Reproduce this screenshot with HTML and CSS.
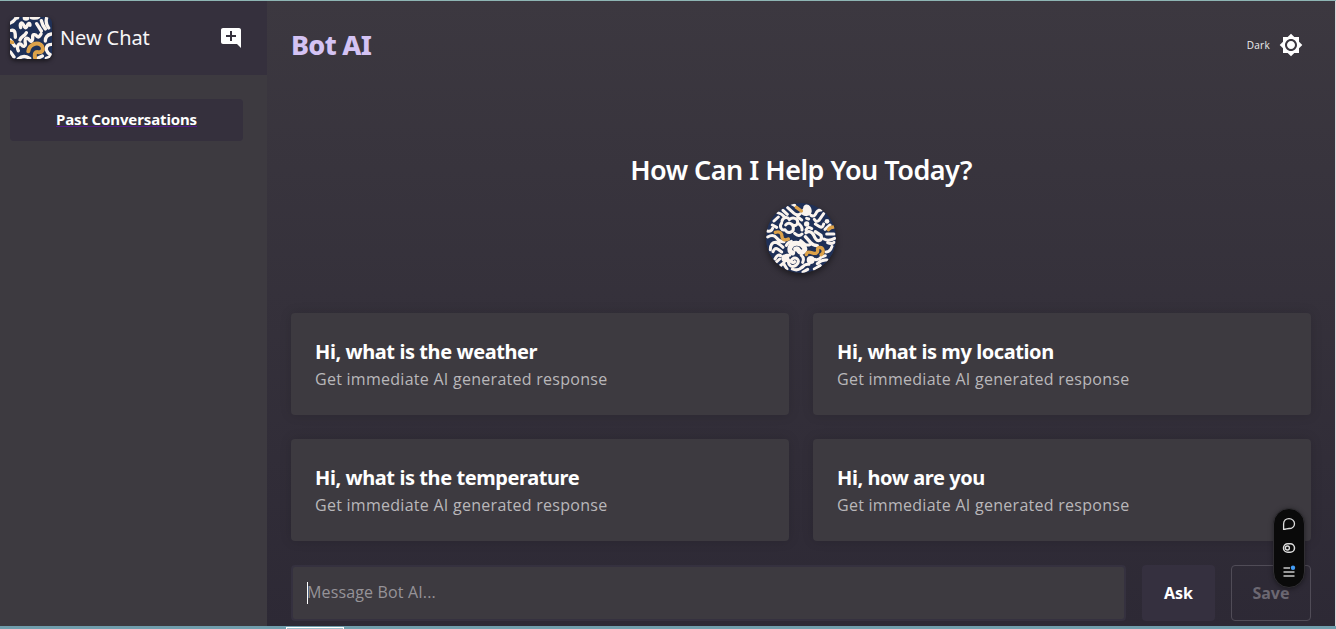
FILE: index.html
```html
<!DOCTYPE html>
<html lang="en">
<head>
<meta charset="utf-8">
<title>Bot AI</title>
<link rel="stylesheet" href="styles.css">
</head>
<body>
<div class="app">
  <aside class="sidebar">
    <header class="new-chat">
      <svg class="logo" viewBox="30 27 126 126">
        <rect x="30" y="27" width="126" height="126" fill="#1f3057"/>
        <g fill="none" stroke="#fbf4ee" stroke-width="10" stroke-linecap="round" stroke-linejoin="round">
          <path d="M30 45q9-2 15-11M62 59c-4-14 4-18 8-9s7 13 11 4 9-11 9-2M94 29q15 4 22-2M110 47l14 22M124 38q3 14 12 25M140 29q-5 17 6 31M34 67c12-2 12 9 12 21M31 96l13 18M55 128c-7-14 3-25 9-18 6 8 14 6 12-5-3-16 6-19 13-8 5 7 10 0 9-9-1-10 8-10 13-3 5 5 9-2 12-7M60 96c4-12 13-10 19-22M136 99c0-13 8-19 18-21M155 109q-18 0-16 17 3 9 13 15M31 132l11 15M55 153q15-14 34-2M113 151l14-7M139 151l12-5"/>
        </g>
        <path d="M28 99q6 5 14 4" fill="none" stroke="#dda249" stroke-width="10"/>
        <path d="M85 130c3-22 25-27 37-20 12 9 6 24-5 23-12-4-14 4-12 16" fill="none" stroke="#dda249" stroke-width="12" stroke-linecap="round"/>
        <ellipse cx="50" cy="29" rx="8" ry="6" fill="#fbf4ee"/><ellipse cx="78" cy="30" rx="10" ry="8" fill="#fbf4ee"/>
      </svg>
      <span class="new-chat-label">New Chat</span>
      <svg class="add-icon" viewBox="0 0 24 24"><path fill="#fff" d="M22 4c0-1.100-.9-2-2-2H4c-1.100 0-2 .9-2 2v12c0 1.100.9 2 2 2h14l4 4V4zm-5 7h-4v4h-2v-4H7V9h4V5h2v4h4v2z"/></svg>
    </header>
    <a class="past"><span>Past Conversations</span></a>
  </aside>
  <main class="main">
    <header class="topbar">
      <h1 class="brand">Bot AI</h1>
      <div class="mode"><span class="mode-label">Dark</span>
        <svg class="mode-icon" viewBox="0 0 24 24"><path fill="#fff" d="M20 8.690V4h-4.690L12 .69 8.690 4H4v4.690L.69 12 4 15.310V20h4.690L12 23.310 15.310 20H20v-4.690L23.310 12 20 8.690zM12 18c-3.310 0-6-2.690-6-6s2.690-6 6-6 6 2.690 6 6-2.690 6-6 6zm0-10c-2.210 0-4 1.790-4 4s1.790 4 4 4 4-1.790 4-4-1.790-4-4-4z"/></svg>
      </div>
    </header>
    <section class="hero">
      <h2 class="question">How Can I Help You Today?</h2>
      <svg class="emblem" viewBox="33 24 210 210">
        <rect x="33" y="24" width="210" height="210" fill="#1f3057"/>
        <g fill="none" stroke="#fbf4ee" stroke-width="9" stroke-linecap="round" stroke-linejoin="round">
          <path d="M98 38l19 17q10 8 18 2M84 46l13 12M68 53q12 3 20 12M70 66l-13 12M52 90l13 7M111 27l8 4"/>
          <path d="M81 78c4-12 17-14 22-4 10-9 25-4 25 7 0 9-9 14-16 8M80 84c-8 10-1 24 10 20 8 15 27 8 25-7-2-12-17-17-23-7"/>
          <path d="M128 66l12 9M130 85q13 10 11 20M119 115q13 12 22 2M155 70l6 2M168 61q9 5 14-4 5-13 17-12M178 73q5 10 14 3l14-20M153 104q7-12 17-3M181 87l13 8q9 5 12-8M210 103l15-13M215 117h22M207 132q13 8 32-2"/>
          <path d="M153 113q12-9 23 7 6 16 14 17 13 0 8-16l-17-11M151 125l16 18q7 8 20 9" stroke-width="10"/>
          <path d="M37 108q12 4 16-8M38 126q17-10 27 3t22 11M46 164q0-23 18-22 12 6 20 15M54 170q6-15 15-7l11 8M60 192q8-16 17-10M61 204l13-12M75 213l12-10"/>
          <path d="M113 174c-16-3-9-31 13-29 21 0 32 22 15 27-15 0-7-14-19-10" stroke-width="15"/>
          <path d="M94 151q4-9 15-12M137 137l13 11q8 4 15 1M102 196c-6 14 10 24 22 14 14-13-1-28-12-18-8 8 1 15 7 8M139 181q10 8 4 21M142 217q8-11 20-9M112 222q18 8 32-8M144 231l14-8M88 209l8 13M180 193q9 4 19-7l12-4M187 206q14-13 29-11M178 222l18-10M213 171q13-1 18-17M218 143q11 6 19-1M94 181h10"/>
        </g>
        <g fill="#fbf4ee"><path d="M145 35c12-16 27 3 25 15-2 15-22 17-32 6-8-10 8-8 7-21z"/><circle cx="155" cy="87" r="8"/><circle cx="91" cy="190" r="12"/><circle cx="216" cy="79" r="7"/><circle cx="167" cy="195" r="12"/></g>
        <g fill="none" stroke="#dda249" stroke-width="10" stroke-linecap="round"><path d="M124 37l15 11M61 112c16-5 20 5 20 14 2 10 10 10 19 6M154 179c5-18 23 2 30-5 10-5-2-13 7-16 15-3 18 16 7 21"/><path d="M220 104q6-8 16-8"/></g>
      </svg>
    </section>
    <section class="cards">
      <article class="card"><h3>Hi, what is the weather</h3><p>Get immediate AI generated response</p></article>
      <article class="card"><h3>Hi, what is my location</h3><p>Get immediate AI generated response</p></article>
      <article class="card"><h3>Hi, what is the temperature</h3><p>Get immediate AI generated response</p></article>
      <article class="card"><h3>Hi, how are you</h3><p>Get immediate AI generated response</p></article>
    </section>
    <div class="composer">
      <div class="field"><i class="caret"></i><span class="placeholder">Message Bot AI...</span></div>
      <button class="ask">Ask</button>
      <button class="save">Save</button>
    </div>
  </main>
  <div class="toolbar">
    <svg viewBox="0 0 14 14"><path d="M1.600 12.400V7C1.600 3.700 3.900 1.600 7 1.600S12.500 3.900 12.500 6.700 10 11.500 7 11.500c-1.700 0-3.300.9-5.400.9z" fill="none" stroke="#ddd" stroke-width="1.300"/></svg>
    <svg viewBox="0 0 14 14"><rect x="1.500" y="2.700" width="11" height="8.600" rx="4.300" fill="none" stroke="#ddd" stroke-width="1.500"/><circle cx="5.400" cy="7" r="2" fill="none" stroke="#ddd" stroke-width="1.400"/></svg>
    <svg viewBox="0 0 14 14"><path d="M1.500 3h6.500M1.500 7h11M1.500 11h11" stroke="#c8c8c8" stroke-width="1.700"/><circle cx="11" cy="2.800" r="2.200" fill="#439cf5"/></svg>
  </div>
</div>
<div class="bottom-edge"><i></i></div>
</body>
</html>
```
FILE: styles.css
```css
* { box-sizing: border-box; margin: 0; }
body { width: 1336px; height: 629px; overflow: hidden; background: #719ead; font-family: "Open Sans", sans-serif; color: #fff; border-top: 1px solid #8eb5b4; display: flex; flex-direction: column; }
.app { position: relative; display: flex; height: 625px; border-right: 1px solid #d4d4d8; }
.sidebar { width: 267px; background: #3d3a40; }
.new-chat { height: 74px; background: #35303d; display: flex; align-items: center; padding: 0 24px 0 10px; }
.logo { width: 42px; height: 42px; border-radius: 6px; box-shadow: 0 2px 4px #0008; }
.new-chat-label { margin-left: 8px; font: 400 20px/28px "Noto Sans", sans-serif; letter-spacing: -.1px; color: #f7f6f8; white-space: nowrap; }
.add-icon { width: 24px; height: 24px; margin-left: auto; }
.past { margin: 24px 24px 0 10px; padding-bottom: 2px; height: 42px; border-radius: 4px; background: #35303d; display: flex; align-items: center; justify-content: center; font: 700 15px/24px "Noto Sans", sans-serif; }
.past span { text-decoration: underline #551a8b 1px; text-underline-offset: 1px; text-decoration-skip-ink: none; letter-spacing: -.13px; }
.main { flex: 1; padding: 0 24px; background: linear-gradient(#3c3840, #2d2935); display: flex; flex-direction: column; }
.topbar { height: 88px; display: flex; justify-content: space-between; align-items: center; }
.brand { font: 800 27px/40px "Noto Sans", sans-serif; color: #d4c3f4; letter-spacing: -.7px; }
.mode { display: flex; align-items: center; gap: 9px; padding-right: 8px; }
.mode-label { font-size: 10px; line-height: 16px; letter-spacing: .3px; color: #eee; }
.mode-icon { width: 24px; height: 24px; }
.hero { height: 224px; padding-top: 61px; display: flex; flex-direction: column; align-items: center; }
.question { font: 600 27px/40px "Noto Sans", sans-serif; letter-spacing: -.51px; white-space: nowrap; }
.emblem { width: 70px; height: 70px; margin-top: 13px; border-radius: 50%; box-shadow: 0 3px 6px #0007; flex: none; }
.cards { display: grid; grid-template-columns: 498px 498px; grid-auto-rows: 102px; gap: 24px; }
.card { padding: 25px 24px; border-radius: 4px; background: #3d3a40; box-shadow: 0 0 12px #0002; }
.card h3 { font: 700 20px/28px "Noto Sans", sans-serif; letter-spacing: -.42px; }
.card p { font-size: 16px; line-height: 26px; letter-spacing: .27px; color: #b9b7ba; }
.composer { display: flex; gap: 16px; height: 56px; margin-top: 24px; }
.field { width: 835px; border: 2px solid #35313f; border-radius: 4px; background: #3d3a40; padding-left: 14px; display: flex; align-items: center; font-size: 16px; color: #969398; }
.caret { width: 1px; height: 22px; background: #fff; }
.placeholder { margin-left: -1px; padding-bottom: 2px; letter-spacing: .15px; }
.ask, .save { font: 700 16px/24px "Noto Sans", sans-serif; border-radius: 4px; padding: 0; color: #fff; }
.ask { width: 73px; border: 0; background: #35303f; }
.save { width: 80px; border: 1px solid #504c57; background: transparent; color: #6c6872; }
.toolbar { position: absolute; left: 1273px; top: 507px; width: 32px; height: 80px; border: 1px solid #302e33; border-radius: 16px; background: #0a0a0a; box-shadow: 0 1px 5px #0006; display: flex; flex-direction: column; align-items: center; justify-content: center; gap: 10px; }
.toolbar svg { width: 14px; height: 14px; }
.bottom-edge { height: 3px; padding-left: 286px; background: #719ead; }
.bottom-edge i { display: block; width: 58px; height: 3px; margin-top: 1px; border: 1px solid #fff; background: #9ec0cc; }
```
